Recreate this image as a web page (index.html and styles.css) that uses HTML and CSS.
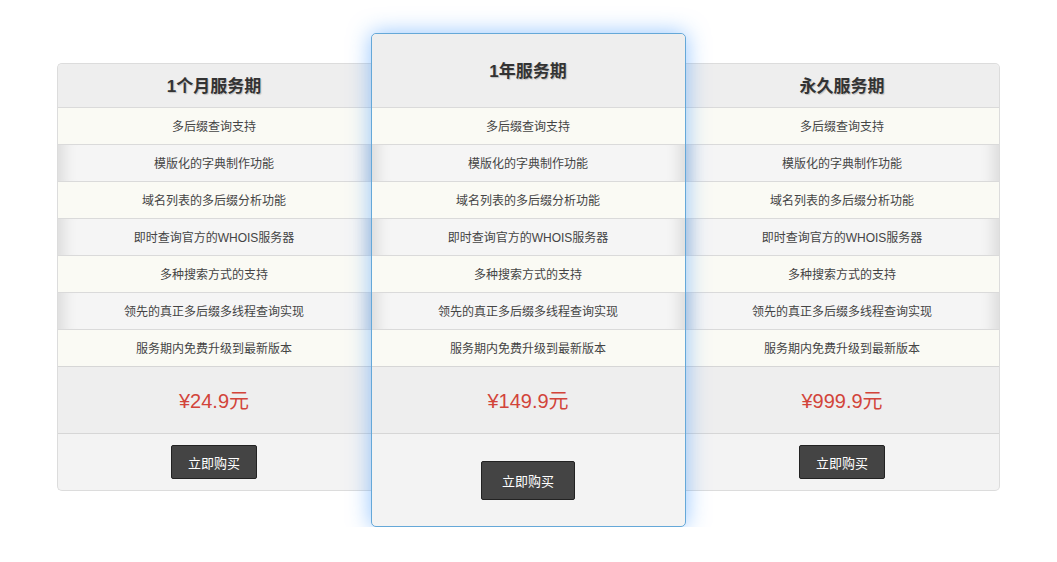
FILE: index.html
```html
<!DOCTYPE html>
<html lang="zh-CN">
<head>
    <meta charset="UTF-8">
    <meta name="viewport" content="width=device-width, initial-scale=1.0">
    <title>服务价格</title>
    <link rel="stylesheet" href="styles.css">
</head>
<body>
    <div class="cennik">
        <div class="plan plan-bok plan-lewy">
            <h3 class="plan-tytul">1个月服务期</h3>
            <ul class="plan-lista">
                <li>多后缀查询支持</li>
                <li>模版化的字典制作功能</li>
                <li>域名列表的多后缀分析功能</li>
                <li>即时查询官方的WHOIS服务器</li>
                <li>多种搜索方式的支持</li>
                <li>领先的真正多后缀多线程查询实现</li>
                <li>服务期内免费升级到最新版本</li>
            </ul>
            <div class="plan-cena">¥24.9元</div>
            <div class="plan-stopka"><button class="kup">立即购买</button></div>
        </div>
        <div class="plan plan-glowny">
            <h3 class="plan-tytul">1年服务期</h3>
            <ul class="plan-lista">
                <li>多后缀查询支持</li>
                <li>模版化的字典制作功能</li>
                <li>域名列表的多后缀分析功能</li>
                <li>即时查询官方的WHOIS服务器</li>
                <li>多种搜索方式的支持</li>
                <li>领先的真正多后缀多线程查询实现</li>
                <li>服务期内免费升级到最新版本</li>
            </ul>
            <div class="plan-cena">¥149.9元</div>
            <div class="plan-stopka"><button class="kup">立即购买</button></div>
        </div>
        <div class="plan plan-bok plan-prawy">
            <h3 class="plan-tytul">永久服务期</h3>
            <ul class="plan-lista">
                <li>多后缀查询支持</li>
                <li>模版化的字典制作功能</li>
                <li>域名列表的多后缀分析功能</li>
                <li>即时查询官方的WHOIS服务器</li>
                <li>多种搜索方式的支持</li>
                <li>领先的真正多后缀多线程查询实现</li>
                <li>服务期内免费升级到最新版本</li>
            </ul>
            <div class="plan-cena">¥999.9元</div>
            <div class="plan-stopka"><button class="kup">立即购买</button></div>
        </div>
    </div>
</body>
</html>
```

FILE: styles.css
```css
body {
    font-family: "Liberation Sans", "Noto Sans CJK SC", sans-serif;
    margin: 0;
    background-color: #ffffff;
    color: #444;
}
.cennik {
    display: flex;
    justify-content: center;
    align-items: flex-start;
    padding-top: 33px;
    padding-right: 1px;
}
.plan {
    background: #f3f3f3;
    text-align: center;
}
.plan-bok {
    width: 313px;
    margin-top: 30px;
    border: 1px solid #dcdcdc;
}
.plan-lewy {
    border-right: none;
    border-radius: 5px 0 0 5px;
}
.plan-prawy {
    border-left: none;
    border-radius: 0 5px 5px 0;
}
.plan-glowny {
    position: relative;
    z-index: 2;
    width: 313px;
    border: 1px solid #65a8d8;
    border-radius: 5px;
    box-shadow: 0 0 22px rgba(40, 140, 255, 0.5);
}
.plan-tytul {
    margin: 0;
    height: 43px;
    line-height: 46px;
    font-size: 17px;
    font-weight: bold;
    color: #333;
    background: #eeeeee;
    text-shadow: 1px 1px 1px rgba(0, 0, 0, 0.2);
    border-radius: 5px 5px 0 0;
}
.plan-lewy .plan-tytul {
    border-radius: 5px 0 0 0;
}
.plan-prawy .plan-tytul {
    border-radius: 0 5px 0 0;
}
.plan-glowny .plan-tytul {
    height: 73px;
    line-height: 76px;
}
.plan-lista {
    list-style: none;
    margin: 0;
    padding: 0;
}
.plan-lista li {
    height: 36px;
    line-height: 38px;
    font-size: 12px;
    color: #444;
    border-top: 1px solid #dadada;
    background: #fafaf4;
}
.plan-lista li:nth-child(even) {
    background: #f5f5f5;
    box-shadow: inset 18px 0 14px -12px rgba(0, 0, 0, 0.1), inset -18px 0 14px -12px rgba(0, 0, 0, 0.1);
}
.plan-cena {
    height: 66px;
    line-height: 68px;
    font-size: 20px;
    color: #d2443a;
    background: #eeeeee;
    border-top: 1px solid #d6d6d6;
}
.plan-stopka {
    height: 56px;
    display: flex;
    justify-content: center;
    align-items: center;
    border-top: 1px solid #d6d6d6;
}
.plan-glowny .plan-stopka {
    height: 92px;
}
.kup {
    width: 86px;
    height: 34px;
    font-family: "Liberation Sans", "Noto Sans CJK SC", sans-serif;
    font-size: 13px;
    color: #ffffff;
    background: #444444;
    border: 1px solid #222;
    border-radius: 2px;
    cursor: pointer;
}
.plan-glowny .kup {
    width: 94px;
    height: 39px;
}
```
